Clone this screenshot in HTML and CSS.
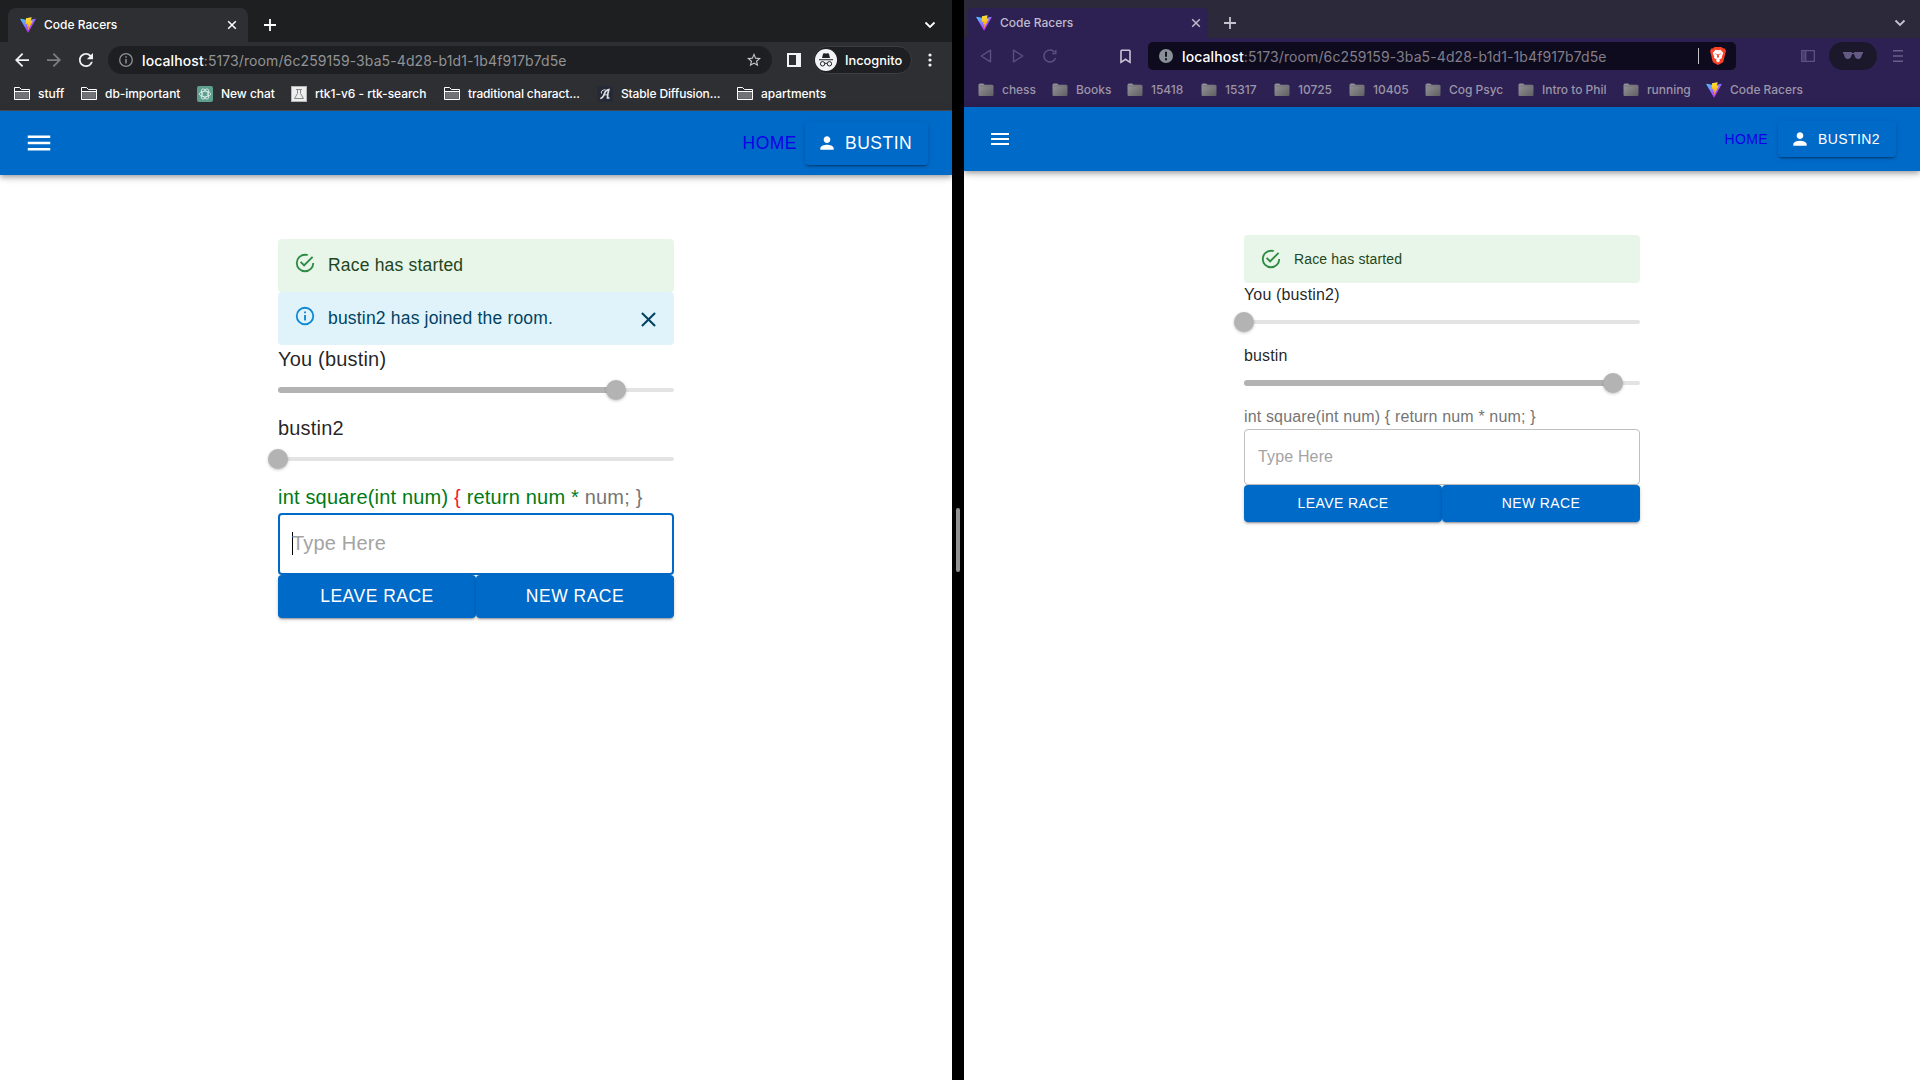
FILE: index.html
```html
<!DOCTYPE html>
<html lang="en">
<head>
<meta charset="utf-8">
<title>Code Racers</title>
<link rel="stylesheet" href="styles.css">
</head>
<body>
<svg class="defs" aria-hidden="true">
  <defs>
    <linearGradient id="va" x1="6" y1="33" x2="235" y2="344" gradientUnits="userSpaceOnUse"><stop stop-color="#41d1ff"/><stop offset="1" stop-color="#bd34fe"/></linearGradient>
    <linearGradient id="vb" x1="194.651" y1="8.818" x2="236.076" y2="292.989" gradientUnits="userSpaceOnUse"><stop stop-color="#ffea83"/><stop offset=".083" stop-color="#ffdd35"/><stop offset="1" stop-color="#ffa800"/></linearGradient>
    <linearGradient id="fg" x1="0" y1="0" x2="1" y2="1"><stop stop-color="#98979c"/><stop offset="1" stop-color="#5f5e62"/></linearGradient>
  </defs>
  <symbol id="vite" viewBox="0 0 410 404">
    <path fill="url(#va)" d="M399.641 59.525L215.643 388.545C211.844 395.338 202.084 395.378 198.228 388.618L10.582 59.556C6.381 52.19 12.68 43.267 21.028 44.759L205.223 77.682C206.398 77.892 207.601 77.89 208.776 77.676L389.119 44.806C397.439 43.289 403.768 52.143 399.641 59.525Z"/>
    <path fill="url(#vb)" d="M292.965 1.574L156.801 28.255C154.563 28.694 152.906 30.59 152.771 32.866L144.395 174.33C144.198 177.662 147.258 180.248 150.51 179.498L188.42 170.749C191.967 169.931 195.172 173.055 194.443 176.622L183.18 231.775C182.422 235.487 185.907 238.661 189.532 237.56L212.947 230.446C216.577 229.344 220.065 232.527 219.297 236.242L201.398 322.875C200.278 328.294 207.486 331.249 210.492 326.603L212.5 323.5L323.454 102.072C325.312 98.365 322.108 94.137 318.036 94.923L279.014 102.454C275.347 103.161 272.227 99.746 273.262 96.158L298.731 7.867C299.767 4.273 296.636 .855 292.965 1.574Z"/>
  </symbol>
  <symbol id="folder" viewBox="0 0 16 16"><path d="M.5 13.500v-12h5l2 2h8v10z" fill="none" stroke="#fff"/><path d="M1.200 5.500h13.600v7.300H1.200z" fill="#717275"/><path d="M1 5.500h14" stroke="#fff"/></symbol>
  <symbol id="folder-solid" viewBox="0 0 16 16"><path d="M.5 3.2Q.5 1.5 2 1.5h3.2l1.400 1.300H14q1.500 0 1.500 1.500v8.700q0 1-1.200 1H1.700Q.5 14 .5 13z" fill="url(#fg)"/><path d="M.5 4h15" stroke="#6c6a72" stroke-width=".6"/></symbol>
  <symbol id="menu" viewBox="0 0 24 24"><path d="M3 18h18v-2H3v2zm0-5h18v-2H3v2zm0-7v2h18V6H3z"/></symbol>
  <symbol id="person" viewBox="0 0 24 24"><path d="M12 12c2.21 0 4-1.79 4-4s-1.79-4-4-4-4 1.79-4 4 1.79 4 4 4zm0 2c-2.67 0-8 1.34-8 4v2h16v-2c0-2.66-5.33-4-8-4z"/></symbol>
  <symbol id="success" viewBox="0 0 24 24"><path d="M20,12A8,8 0 0,1 12,20A8,8 0 0,1 4,12A8,8 0 0,1 12,4C12.76,4 13.5,4.11 14.2,4.31L15.77,2.74C14.61,2.26 13.34,2 12,2A10,10 0 0,0 2,12A10,10 0 0,0 12,22A10,10 0 0,0 22,12M7.91,10.08L6.5,11.5L11,16L21,6L19.59,4.58L11,13.17L7.91,10.08Z"/></symbol>
  <symbol id="info" viewBox="0 0 24 24"><path d="M11,9H13V7H11M12,20C7.59,20 4,16.41 4,12C4,7.59 7.59,4 12,4C16.41,4 20,7.59 20,12C20,16.41 16.41,20 12,20M12,2A10,10 0 0,0 2,12A10,10 0 0,0 12,22A10,10 0 0,0 22,12A10,10 0 0,0 12,2M11,17H13V11H11V17Z"/></symbol>
  <symbol id="close" viewBox="0 0 24 24"><path d="M19 6.41L17.59 5 12 10.59 6.41 5 5 6.41 10.59 12 5 17.59 6.41 19 12 13.41 17.59 19 19 17.59 13.41 12z"/></symbol>
  <symbol id="x" viewBox="0 0 10 10"><path d="M1.2 1.2l7.6 7.6M8.8 1.2L1.2 8.8" fill="none" stroke="currentColor" stroke-width="1.5"/></symbol>
  <symbol id="plus" viewBox="0 0 12 12"><path d="M6 0v12M0 6h12" fill="none" stroke="currentColor" stroke-width="1.8"/></symbol>
  <symbol id="chevron" viewBox="0 0 12 8"><path d="M1.5 1.5L6 6l4.5-4.5" fill="none" stroke="currentColor" stroke-width="1.8"/></symbol>
  <symbol id="reload" viewBox="0 0 24 24"><path d="M17.65 6.35A7.958 7.958 0 0 0 12 4c-4.42 0-7.99 3.58-7.99 8s3.57 8 7.99 8c3.73 0 6.84-2.55 7.73-6h-2.08A5.99 5.99 0 0 1 12 18c-3.31 0-6-2.69-6-6s2.69-6 6-6c1.66 0 3.14.69 4.22 1.78L13 11h7V4l-2.35 2.35z"/></symbol>
</svg>

<main class="desktop">
  <section class="window chrome">
    <div class="tabstrip">
      <div class="tab"><svg class="fav"><use href="#vite"/></svg><span class="tab-title">Code Racers</span><svg class="tab-x"><use href="#x"/></svg></div>
      <svg class="plus"><use href="#plus"/></svg>
      <svg class="chev"><use href="#chevron"/></svg>
    </div>
    <div class="toolbar">
      <svg class="nav back" viewBox="4 4 16 16"><path d="M20 11H7.83l5.59-5.59L12 4l-8 8 8 8 1.41-1.41L7.83 13H20v-2z"/></svg>
      <svg class="nav fwd" viewBox="4 4 16 16"><path d="M4 11h12.17l-5.59-5.59L12 4l8 8-8 8-1.41-1.41L16.17 13H4v-2z"/></svg>
      <svg class="nav rel" viewBox="4 4 16 16"><use href="#reload" width="24" height="24"/></svg>
      <div class="omnibox">
        <svg class="site" viewBox="0 0 14 14"><circle cx="7" cy="7" r="6.3" fill="none" stroke="#8f9296" stroke-width="1.3"/><path d="M7 6v4.5M7 3.3v1.5" stroke="#8f9296" stroke-width="1.5"/></svg>
        <span class="url"><b>localhost</b>:5173/room/6c259159-3ba5-4d28-b1d1-1b4f917b7d5e</span>
        <svg class="star" viewBox="2 2 20 20"><path d="M22 9.24l-7.19-.62L12 2 9.19 8.63 2 9.24l5.46 4.73L5.82 21 12 17.27 18.18 21l-1.63-7.03L22 9.24zM12 15.4l-3.76 2.27 1-4.28-3.32-2.88 4.38-.38L12 6.1l1.71 4.04 4.38.38-3.32 2.88 1 4.28L12 15.4z"/></svg>
      </div>
      <svg class="panel" viewBox="0 0 14 14"><path d="M0 0h14v14H0zM2 2v10h7V2z" fill-rule="evenodd"/></svg>
      <div class="incog"><svg viewBox="0 0 22 22"><circle cx="11" cy="11" r="11" fill="#f1f3f4"/><path d="M7 9l1-4q.3-1 1.5-.7 1.5.5 3 0Q13.7 4 14 5l1 4zM4 10.200h14v1.100H4z" fill="#202124"/><path d="M9.8 14.500q1.200-.7 2.400 0" fill="none" stroke="#202124"/><circle cx="7.600" cy="14.800" r="2.200" fill="none" stroke="#202124"/><circle cx="14.400" cy="14.800" r="2.200" fill="none" stroke="#202124"/></svg><span>Incognito</span></div>
      <svg class="dots" viewBox="0 0 4 14"><circle cx="2" cy="2" r="1.6"/><circle cx="2" cy="7" r="1.6"/><circle cx="2" cy="12" r="1.6"/></svg>
    </div>
    <div class="bookmarks">
      <span><svg><use href="#folder"/></svg>stuff</span>
      <span><svg><use href="#folder"/></svg>db-important</span>
      <span><svg viewBox="0 0 16 16"><rect width="16" height="16" rx="2" fill="#5f9f8d"/><g fill="none" stroke="#e4f1ed" stroke-width=".8"><ellipse cx="8" cy="8" rx="5.6" ry="2.8"/><ellipse cx="8" cy="8" rx="5.6" ry="2.8" transform="rotate(60 8 8)"/><ellipse cx="8" cy="8" rx="5.6" ry="2.8" transform="rotate(120 8 8)"/></g></svg>New chat</span>
      <span><svg viewBox="0 0 16 16"><path d="M0 0h16v16H0z" fill="#b5b5b5"/><path d="M1 1h14v14H1z" fill="#eee"/><path d="M5 3.500h6M6.500 3.500v4L3.500 12.500h9l-3-5v-4" fill="none" stroke="#8a8a8a"/></svg>rtk1-v6 - rtk-search</span>
      <span><svg><use href="#folder"/></svg>traditional charact...</span>
      <span><svg viewBox="0 0 16 16"><path d="M0 0h16v16H0z" fill="#252a36"/><path d="M3.300 12.300q2.200.2 4-4.300 1.500-4 4.500-4.300-1.300 4-1.300 8.300h2" fill="none" stroke="#dfe1e5" stroke-width="1.700"/><path d="M4.500 7.500Q3.500 4 8.500 3.700M6.500 8.800h4.500" fill="none" stroke="#dfe1e5"/></svg>Stable Diffusion...</span>
      <span><svg><use href="#folder"/></svg>apartments</span>
    </div>
    <div class="page large">
      <header class="appbar">
        <svg class="burger"><use href="#menu"/></svg>
        <a class="home">HOME</a>
        <button class="user"><svg><use href="#person"/></svg>BUSTIN</button>
      </header>
      <div class="race">
        <div class="alert ok"><svg><use href="#success"/></svg><span>Race has started</span></div>
        <div class="alert note"><svg><use href="#info"/></svg><span>bustin2 has joined the room.</span><svg class="dismiss"><use href="#close"/></svg></div>
        <p>You (bustin)</p>
        <div class="slider"><i class="track" style="width:85.4%"></i><i class="thumb" style="left:85.4%"></i></div>
        <p>bustin2</p>
        <div class="slider"><i class="thumb" style="left:0%"></i></div>
        <p class="code"><span class="good">int square(int num) </span><span class="bad">{ </span><span class="good">return num * </span>num; }</p>
        <div class="field focus"><i class="caret"></i>Type Here</div>
        <div class="actions"><button>LEAVE RACE</button><button>NEW RACE</button></div>
      </div>
    </div>
  </section>

  <div class="divider"><i></i></div>

  <section class="window brave">
    <div class="tabstrip">
      <div class="tab"><svg class="fav"><use href="#vite"/></svg><span class="tab-title">Code Racers</span><svg class="tab-x"><use href="#x"/></svg></div>
      <svg class="plus"><use href="#plus"/></svg>
      <svg class="chev"><use href="#chevron"/></svg>
    </div>
    <div class="toolbar">
      <svg class="tri" viewBox="0 0 12 14"><path d="M10.5 1.2v11.6L1.2 7z"/></svg>
      <svg class="tri next" viewBox="0 0 12 14"><path d="M1.5 1.2v11.6L10.8 7z"/></svg>
      <svg class="again" viewBox="0 0 14 14"><path d="M12.6 9A6 6 0 1 1 11.5 3M12.8 1v3.500H9.300" fill="none" stroke="#5d4f81" stroke-width="1.5"/></svg>
      <svg class="mark" viewBox="0 0 11 14"><path d="M1 1.500q0-.7.7-.7h7.600q.7 0 .7.700v11.300L5.500 9.800 1 12.800z" fill="none" stroke="#c9c4d6" stroke-width="1.6"/></svg>
      <div class="omnibox">
        <svg class="site" viewBox="0 0 14 14"><circle cx="7" cy="7" r="7" fill="#8a9097"/><path d="M7 2.800v5M7 9.300v2" stroke="#0f0b1e" stroke-width="1.9"/></svg>
        <span class="url"><b>localhost</b>:5173/room/6c259159-3ba5-4d28-b1d1-1b4f917b7d5e</span>
        <i class="sep"></i>
        <svg class="lion" viewBox="0 0 16 18"><path d="M4.500 0h7l1.500 1.500 1.500-.2L16 4l-.5 1.500L13.500 14q-.3 1-1.200 1.700L8 18l-4.300-2.300Q2.800 15 2.500 14L.5 5.500 0 4l1.500-2.700 1.500.2z" fill="#fb4226"/><path d="M8 3.300l2.500-.5L13.300 6l-1.500 3.500.2 1.500-2.700 1.500L10 14l-2 1.600L6 14l.7-1.500L4 11l.2-1.500L2.700 6l2.800-3.200z" fill="#fff"/><path d="M4.500 6.300l2.300.8-.3.900zM11.500 6.300l-2.300.8.300.9zM7.300 7h1.400l.3 3-1 1-1-1z" fill="#fb4226"/></svg>
      </div>
      <svg class="side" viewBox="0 0 14 12"><path d="M.7.7h12.600v10.600H.7zM4.700.7v10.600" fill="none" stroke="#5e5180" stroke-width="1.3"/><path d="M1 1h3v10H1z" fill="#4b3e6e"/></svg>
      <div class="shades"><svg viewBox="0 0 20 8"><path d="M0 0h8.500l.7 1h1.600l.7-1H20v1.500l-1 .8q-.5 4.700-3.700 4.700-3.300 0-4-4.200L10.600 2H9.400l-.7.8Q8 7 4.700 7 1.500 7 1 2.300L0 1.500z"/></svg></div>
      <svg class="ham" viewBox="0 0 10 12"><path d="M0 .8h10M0 6h10M0 11.200h10" stroke="#6a5e8a" stroke-width="1.4"/></svg>
    </div>
    <div class="bookmarks">
      <span><svg><use href="#folder-solid"/></svg>chess</span>
      <span><svg><use href="#folder-solid"/></svg>Books</span>
      <span><svg><use href="#folder-solid"/></svg>15418</span>
      <span><svg><use href="#folder-solid"/></svg>15317</span>
      <span><svg><use href="#folder-solid"/></svg>10725</span>
      <span><svg><use href="#folder-solid"/></svg>10405</span>
      <span><svg><use href="#folder-solid"/></svg>Cog Psyc</span>
      <span><svg><use href="#folder-solid"/></svg>Intro to Phil</span>
      <span><svg><use href="#folder-solid"/></svg>running</span>
      <span><svg><use href="#vite"/></svg>Code Racers</span>
    </div>
    <div class="page">
      <header class="appbar">
        <svg class="burger"><use href="#menu"/></svg>
        <a class="home">HOME</a>
        <button class="user"><svg><use href="#person"/></svg>BUSTIN2</button>
      </header>
      <div class="race">
        <div class="alert ok"><svg><use href="#success"/></svg><span>Race has started</span></div>
        <p>You (bustin2)</p>
        <div class="slider"><i class="thumb" style="left:0%"></i></div>
        <p>bustin</p>
        <div class="slider"><i class="track" style="width:93.2%"></i><i class="thumb" style="left:93.2%"></i></div>
        <p class="code">int square(int num) { return num * num; }</p>
        <div class="field">Type Here</div>
        <div class="actions"><button>LEAVE RACE</button><button>NEW RACE</button></div>
      </div>
    </div>
  </section>
</main>
</body>
</html>
```
FILE: styles.css
```css
* { box-sizing: border-box; }
body { margin: 0; background: #000; overflow: hidden; }
svg { display: block; flex: none; fill: currentColor; }
.defs { position: absolute; width: 0; height: 0; }

.desktop { display: grid; grid-template-columns: 952px 12px 956px; height: 1080px; }
.divider { display: flex; align-items: flex-start; justify-content: center; background: #000; padding-top: 508px; }
.divider i { width: 4px; height: 64px; border-radius: 2px; background: #919191; }
.window { display: flex; flex-direction: column; min-width: 0; font-family: Inter, "Liberation Sans", sans-serif; overflow: hidden; }

/* Tab strip */
.tabstrip { display: flex; align-items: center; flex: none; }
.tab { display: flex; align-items: center; align-self: flex-end; width: 240px; font-size: 12px; font-weight: 500; }
.fav { width: 16px; height: 16px; margin-right: 8px; }
.tab-title { flex: 1; white-space: nowrap; }
.tab-x { width: 10px; height: 10px; }
.plus { width: 12px; height: 12px; margin-left: 16px; }
.chev { width: 12px; height: 8px; margin-left: auto; }

.toolbar { display: flex; align-items: center; flex: none; }
.omnibox { display: flex; align-items: center; height: 28px; flex: none; font-size: 14px; }
.url { white-space: nowrap; letter-spacing: .1px; }
.url b { font-weight: 500; color: #fff; }
.site { width: 14px; height: 14px; }

.bookmarks { display: flex; align-items: center; flex: none; font-size: 12px; font-weight: 500; }
.bookmarks span { display: flex; align-items: center; gap: 8px; white-space: nowrap; flex: none; }
.bookmarks svg { width: 16px; height: 16px; }

/* Incognito window */
.chrome .tabstrip { height: 42px; background: #1e1f21; color: #fff; padding: 8px 16px 0 8px; }
.chrome .tab { height: 34px; background: #2e2f33; border-radius: 8px 8px 0 0; padding: 0 11px 0 12px; }
.chrome .tab-title { padding-bottom: 1px; }
.chrome .toolbar { height: 36px; background: #2e2f33; color: #f1f3f4; padding-left: 15px; }
.nav { width: 14px; height: 14px; }
.fwd { color: #7c7e81; margin-left: 18px; }
.rel { margin-left: 18px; }
.chrome .omnibox { width: 664px; margin-left: 15px; border-radius: 14px; background: #1e1f22; color: #919396; padding: 0 11px; }
.chrome .url { margin-left: 9px; flex: 1; }
.star { width: 14px; height: 14px; color: #c6c8ca; }
.panel { width: 14px; height: 14px; margin-left: 15px; }
.incog { display: flex; align-items: center; gap: 8px; width: 99px; height: 28px; margin-left: 12px; padding-left: 1px; border: 1px solid #3c3d40; border-radius: 14px; background: #1e1f22; font-size: 12.8px; font-weight: 500; color: #fff; }
.incog svg { width: 22px; height: 22px; }
.dots { width: 4px; height: 14px; margin-left: 16px; }
.chrome .bookmarks { height: 33px; background: #2e2f33; color: #fff; padding: 0 0 1px 14px; border-bottom: 1px solid #4b4c4f; letter-spacing: -.04px; }
.chrome .bookmarks span:nth-child(1) { width: 67px; }
.chrome .bookmarks span:nth-child(2) { width: 116px; }
.chrome .bookmarks span:nth-child(3) { width: 94px; }
.chrome .bookmarks span:nth-child(4),
.chrome .bookmarks span:nth-child(5) { width: 153px; }
.chrome .bookmarks span:nth-child(5) { letter-spacing: -.14px; }
.chrome .bookmarks span:nth-child(6) { width: 140px; letter-spacing: -.14px; }

/* Private window */
.brave .tabstrip { height: 38px; background: #2c293b; color: #c6c3cf; padding: 8px 14px 0 4px; }
.brave .tab { height: 30px; background: #2d2052; border-radius: 5px 5px 0 0; padding: 0 7px 1px 8px; color: #c0bbcb; }
.brave .toolbar { height: 36px; background: #2d2052; padding-left: 16px; }
.tri { width: 12px; height: 14px; fill: none; stroke: #5d4f81; stroke-width: 1.4; stroke-linejoin: round; }
.next { margin-left: 20px; }
.again { width: 14px; height: 14px; margin-left: 19px; }
.mark { width: 11px; height: 15px; margin-left: 63px; margin-right: 1px; }
.brave .omnibox { width: 588px; margin-left: 16px; border-radius: 5px; background: #0f0b1e; color: #817e8a; padding: 0 10px 0 11px; }
.brave .url { margin-left: 9px; flex: 1; }
.sep { width: 1px; height: 16px; background: #c5c3cb; margin-right: 11px; }
.lion { width: 16px; height: 18px; }
.side { width: 14px; height: 12px; margin-left: 65px; }
.shades { display: flex; align-items: center; justify-content: center; width: 48px; height: 28px; margin-left: 14px; border-radius: 14px; background: #1c182b; color: #655a83; }
.shades svg { width: 20px; height: 8px; }
.ham { width: 10px; height: 12px; margin-left: 16px; }
.brave .bookmarks { height: 33px; background: #2d2052; color: #9b95a8; padding: 0 0 2px 14px; font-weight: 500; letter-spacing: -.03px; }
.brave .bookmarks span { width: 74px; }
.brave .bookmarks span:nth-child(2),
.brave .bookmarks span:nth-child(5) { width: 75px; }
.brave .bookmarks span:nth-child(4) { width: 73px; }
.brave .bookmarks span:nth-child(3) { width: 74px; }
.brave .bookmarks span:nth-child(6) { width: 76px; }
.brave .bookmarks span:nth-child(7) { width: 93px; }
.brave .bookmarks span:nth-child(8) { width: 105px; }
.brave .bookmarks span:nth-child(9) { width: 83px; }

/* Race page; --rem is the page's root text size */
.page { --rem: 16px; flex: 1; background: #fff; color: rgba(0,0,0,.87); font-family: "Liberation Sans", Arial, sans-serif; font-size: var(--rem); letter-spacing: .00938em; }
.large { --rem: 20px; }
.appbar { display: flex; align-items: center; height: 64px; padding: 0 24px; background: #006ac9; color: #fff; font-size: calc(var(--rem) * .875); letter-spacing: .02857em; box-shadow: 0 2px 4px -1px rgba(0,0,0,.2), 0 4px 5px rgba(0,0,0,.14), 0 1px 10px rgba(0,0,0,.12); }
.burger { width: calc(var(--rem) * 1.5); height: calc(var(--rem) * 1.5); }
.home { color: #1100e5; margin-left: auto; }
.page button { font: inherit; letter-spacing: inherit; color: #fff; background: #006ac9; border: 0; border-radius: 4px; padding: 0; box-shadow: 0 3px 1px -2px rgba(0,0,0,.2), 0 2px 2px rgba(0,0,0,.14), 0 1px 5px rgba(0,0,0,.12); }
.appbar .user { display: flex; align-items: center; gap: 8px; width: 118px; height: 36px; margin-left: 10px; padding-left: 12px; }
.large .appbar .user { width: 123px; height: 43px; margin-left: 8px; gap: 8px; padding-left: 12px; }
.user svg { width: 20px; height: 20px; }

.race { width: 396px; margin: 64px auto 0; }
.page:not(.large) .race { margin-left: 280px; }
.alert { display: flex; align-items: center; height: 48px; padding: 0 16px; border-radius: 4px; font-size: calc(var(--rem) * .875); letter-spacing: .01071em; }
.large .alert { height: 53px; }
.alert svg { width: 22px; height: 22px; margin-right: 12px; }
.large .alert svg { margin-bottom: 6px; }
.ok { background: #e8f5e9; color: #1e4620; }
.ok svg { color: #2e8b43; }
.note { background: #e0f3fb; color: #014361; }
.note svg { color: #0c87d4; }
.large .alert .dismiss { width: 25px; height: 25px; margin: 1px -3px 0 auto; color: #014361; }
.race p { margin: 0; line-height: 1.5; white-space: pre; }
.large .race p { height: 30px; line-height: 28px; }
.slider { position: relative; height: 37px; }
.large .slider { height: 39px; }
.slider::before { content: ""; position: absolute; left: 0; right: 0; top: 13px; height: 4px; border-radius: 2px; background: #e3e3e3; }
.track { position: absolute; left: 0; top: 12px; height: 6px; border-radius: 3px; background: #b3b3b3; }
.thumb { position: absolute; top: 5px; width: 20px; height: 20px; margin-left: -10px; border-radius: 50%; background: #b3b3b3; box-shadow: 0 1px 3px rgba(0,0,0,.25); }
.code { color: #757575; }
.good { color: #007a14; }
.bad { color: #f8172a; }
.field { display: flex; align-items: center; height: 56px; padding: 0 13px; border: 1px solid #c0c0c0; border-radius: 4px; color: #a3a3a3; }
.focus { height: 61.5px; padding: 0 12px; border: 2px solid #006ac9; }
.caret { width: 1px; height: 23px; margin-right: -1px; background: #000; }
.actions { display: grid; grid-template-columns: 1fr 1fr; font-size: calc(var(--rem) * .875); letter-spacing: .02857em; }
.page .actions button { height: 37px; padding-bottom: 1px; }
.large .actions button { height: 43.5px; padding-bottom: 0; }
```
